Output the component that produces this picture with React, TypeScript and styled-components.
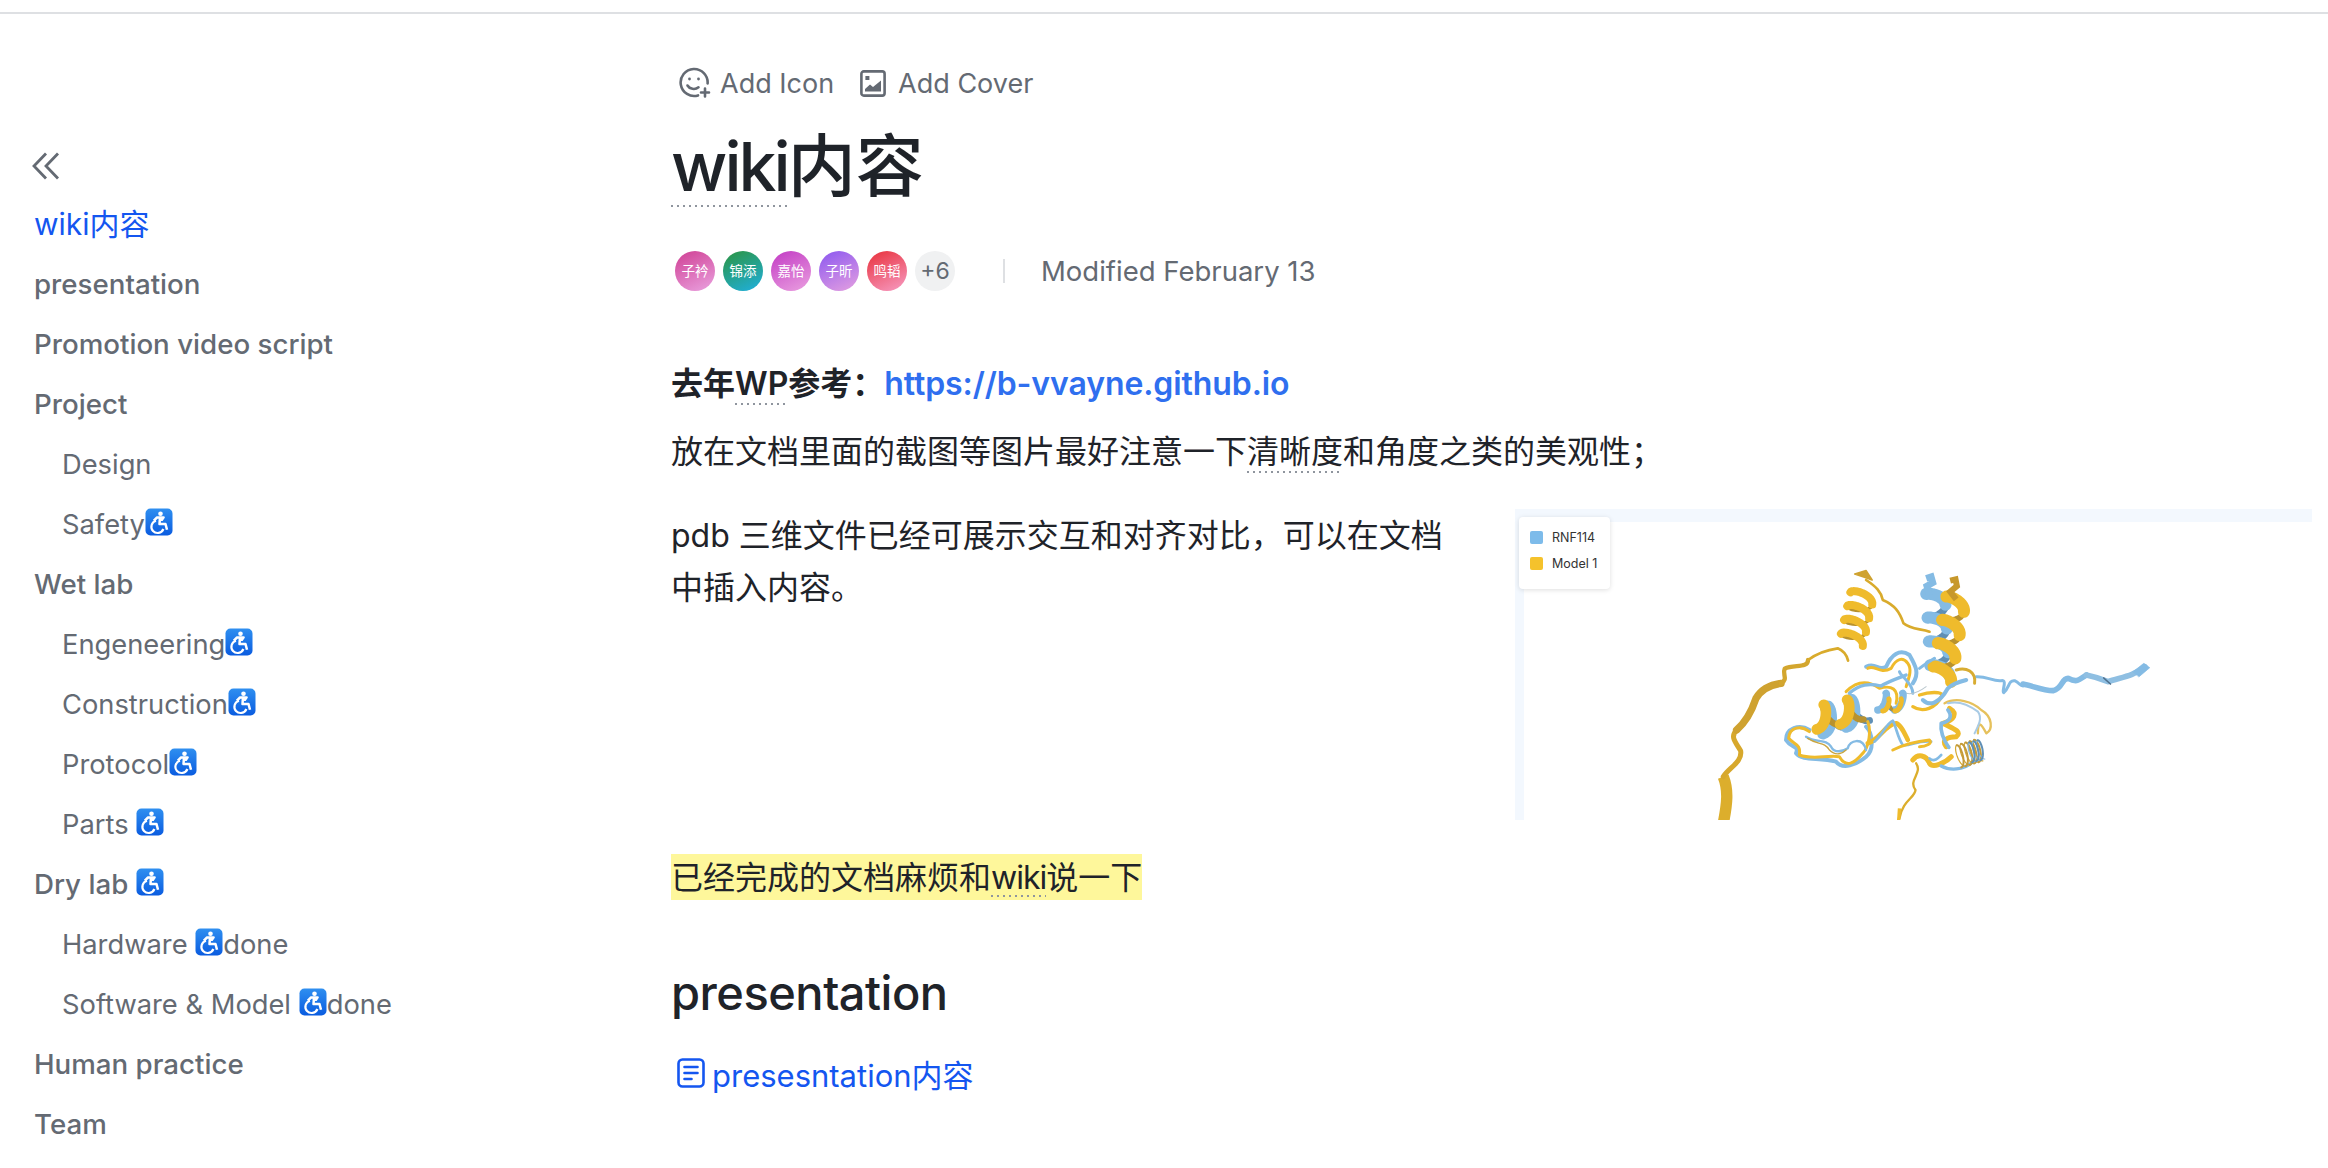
import React from "react";
import styled, {createGlobalStyle} from "styled-components";

const GlobalStyle = createGlobalStyle`
  html, body {
    margin: 0;
    height: 100%;
    background: #fff;
    overflow: hidden;
  }
  body {
    font-family: Inter, "Noto Sans CJK SC", sans-serif;
    color: #1f2329;
  }
`;

const Page = styled.div`
  width: 2328px;
  height: 1168px;
  display: flex;
  flex-direction: column;
`;

const TopBar = styled.div`
  height: 12px;
  flex: none;
  border-bottom: 2px solid #dee0e3;
`;

const Body = styled.div`
  flex: 1;
  display: flex;
  min-height: 0;
`;

const Sidebar = styled.aside`
  width: 671px;
  flex: none;
  padding: 138px 0 0 34px;
  box-sizing: border-box;
`;

const CollapseButton = styled.button`
  display: block;
  width: 30px;
  height: 28px;
  margin: 0 0 14px -3px;
  padding: 0;
  border: 0;
  background: none;
  color: #646a73;
`;

const NavList = styled.nav`
  display: flex;
  flex-direction: column;
`;

const NavItem = styled.a<{$level?: number; $active?: boolean}>`
  height: 60px;
  line-height: ${p => (p.$level ? 62 : 60)}px;
  padding-left: ${p => (p.$level ? 28 : 0)}px;
  font-size: ${p => (p.$active ? 30 : p.$level ? 27.3 : 27.7)}px;
  font-weight: ${p => (p.$level || p.$active ? 400 : 500)};
  color: ${p => (p.$active ? "#1456f0" : "#646a73")};
  white-space: pre;
`;

const Emoji = styled.svg`
  width: 28px;
  height: 28px;
  vertical-align: -2px;
`;

const Main = styled.main`
  flex: 1;
  min-width: 0;
`;

const AddRow = styled.div`
  display: flex;
  align-items: center;
  height: 40px;
  margin-top: 49px;
  padding-left: 8px;
`;

const AddButton = styled.span<{$gap: number}>`
  display: inline-flex;
  align-items: center;
  gap: ${p => p.$gap}px;
  margin-right: 26px;
  font-size: 27px;
  color: #646a73;
`;

const Title = styled.h1`
  margin: 18px 0 0;
  height: 90px;
  font-size: 68px;
  line-height: 90px;
  font-weight: 500;
`;

const Dotted = styled.span<{$pad?: number; $spacing?: number}>`
  padding-bottom: ${p => p.$pad ?? 0}px;
  letter-spacing: ${p => p.$spacing ?? 0}px;
  background: linear-gradient(to right, #8f959e 2px, transparent 2px) left bottom / 6px 2px repeat-x;
`;

const MetaRow = styled.div`
  display: flex;
  align-items: center;
  height: 40px;
  margin-top: 40px;
  padding-left: 4px;
`;

const Avatar = styled.span<{$from: string; $to: string}>`
  width: 40px;
  height: 40px;
  margin-right: 8px;
  border-radius: 50%;
  background: linear-gradient(155deg, ${p => p.$from}, ${p => p.$to});
  color: #fff;
  font-size: 13.5px;
  line-height: 40px;
  text-align: center;
  white-space: nowrap;
`;

const MoreAvatar = styled.span`
  width: 40px;
  height: 40px;
  border-radius: 50%;
  background: #f0f1f2;
  color: #646a73;
  font-size: 23px;
  line-height: 40px;
  text-align: center;
`;

const MetaDivider = styled.span`
  width: 2px;
  height: 24px;
  margin: 0 36px 0 48px;
  background: #dee0e3;
`;

const Modified = styled.span`
  font-size: 27.5px;
  color: #646a73;
`;

const Para = styled.p<{$bold?: boolean; $top: number}>`
  margin: ${p => p.$top}px 0 0;
  font-size: 32px;
  line-height: 52px;
  font-weight: ${p => (p.$bold ? 600 : 400)};
  white-space: nowrap;
`;

const SiteLink = styled.a`
  color: #2f6fef;
  letter-spacing: -0.1px;
`;

const MediaRow = styled.div`
  display: flex;
  align-items: flex-start;
  height: 311px;
  margin-top: 31px;
`;

const MediaText = styled.p`
  width: 844px;
  flex: none;
  margin: 1px 0 0;
  font-size: 32px;
  line-height: 52px;
  padding-right: 50px;
  box-sizing: border-box;
`;

const Figure = styled.figure`
  position: relative;
  width: 797px;
  height: 311px;
  margin: 0;
  flex: none;
  box-sizing: border-box;
  border-top: 13px solid #f3f8fe;
  border-left: 9px solid #f3f8fe;
`;

const Structure = styled.svg`
  display: block;
  position: absolute;
  left: -9px;
  top: -13px;
  width: 797px;
  height: 311px;
`;

const Legend = styled.div`
  position: absolute;
  left: -5px;
  top: -5px;
  width: 91px;
  height: 72px;
  box-sizing: border-box;
  padding-top: 14px;
  background: #fff;
  border-radius: 4px;
  box-shadow: 0 1px 5px rgba(0, 0, 0, 0.13);
`;

const LegendRow = styled.div`
  display: flex;
  align-items: center;
  gap: 9px;
  height: 13px;
  margin: 0 0 13px 11px;
  font-size: 12.5px;
  color: #333;
  white-space: nowrap;
`;

const Swatch = styled.i<{$color: string}>`
  width: 13px;
  height: 13px;
  border-radius: 2px;
  background: ${p => p.$color};
`;

const Highlight = styled.span`
  display: inline-block;
  height: 46px;
  line-height: 48px;
  background: #fef79b;
`;

const SectionTitle = styled.h2`
  margin: 57px 0 0;
  height: 64px;
  font-size: 47px;
  line-height: 64px;
  font-weight: 500;
  letter-spacing: -0.5px;
`;

const DocLink = styled.a`
  display: flex;
  align-items: center;
  gap: 7px;
  height: 40px;
  margin-top: 28px;
  padding-left: 6px;
  font-size: 31px;
  color: #1456f0;
`;

const SmileIcon = () => (
  <svg width="32" height="32" viewBox="0 0 32 32" fill="none" stroke="#646a73" strokeWidth="2.6" strokeLinecap="round">
    <path d="M19 28.4A13.5 13.5 0 1 1 28.6 16.5" />
    <path d="M8.5 18.5c2 3.6 7.5 4.6 11 1.8" />
    <circle cx="10.5" cy="12" r="1.4" fill="#646a73" stroke="none" />
    <circle cx="19.5" cy="12" r="1.4" fill="#646a73" stroke="none" />
    <path d="M26 21.5v8M22 25.5h8" />
  </svg>
);

const CoverIcon = () => (
  <svg width="26" height="27" viewBox="0 0 26 27" fill="none">
    <rect x="1.4" y="1.4" width="23.2" height="24.2" rx="2.4" stroke="#646a73" strokeWidth="2.6" />
    <rect x="5.4" y="6" width="4" height="4" fill="#646a73" />
    <path d="M5 21.5v-2.5l5-4.5 3 2.5 8-6.5v11z" fill="#646a73" />
  </svg>
);

const DocIcon = () => (
  <svg width="28" height="30" viewBox="0 0 28 30" fill="none" stroke="#1456f0" strokeWidth="2.6" strokeLinecap="round">
    <rect x="1.5" y="1.5" width="25" height="27" rx="4" />
    <path d="M7.5 9h13M7.5 15h13M7.5 21h7" />
  </svg>
);

const ChevronsIcon = () => (
  <svg width="30" height="28" viewBox="0 0 30 28" fill="none" stroke="#646a73" strokeWidth="2.8">
    <path d="M15 1.5 3 14l12 12.5" />
    <path d="M27 1.5 15 14l12 12.5" />
  </svg>
);

const WheelchairEmoji = () => (
  <Emoji viewBox="0 0 28 28">
    <defs>
      <linearGradient id="emojiBlue" x1="0" y1="0" x2="0" y2="1">
        <stop offset="0" stopColor="#2f8ff0" />
        <stop offset="1" stopColor="#0a5ce0" />
      </linearGradient>
    </defs>
    <rect x="0.5" y="0.5" width="27" height="27" rx="5" fill="url(#emojiBlue)" />
    <circle cx="15.5" cy="5.8" r="2.3" fill="#fff" />
    <path
      d="M15 9 14.5 16H20.5L22 21.8M8.8 12.6 12 9.5 18.6 9.4 16.6 12.4"
      fill="none"
      stroke="#fff"
      strokeWidth="2.5"
      strokeLinejoin="round"
    />
    <path d="M11 12.8a6.2 6.2 0 1 0 7.4 8.2" fill="none" stroke="#fff" strokeWidth="2.2" />
  </Emoji>
);

// front and back strands of a helix between two points, sampled along its axis
const helix = (x0: number, y0: number, x1: number, y1: number, r: number, turns: number, k: number) => {
  const dx = x1 - x0;
  const dy = y1 - y0;
  const len = Math.hypot(dx, dy);
  const nx = -dy / len;
  const ny = dx / len;
  const front: string[] = [];
  const back: string[] = [];
  const halves = Math.round(turns * 2);
  for (let turn = 0; turn < halves; turn++) {
    const pts: string[] = [];
    for (let i = 0; i <= 14; i++) {
      const t = (turn + i / 14) / halves;
      const a = t * turns * Math.PI * 2;
      const s = Math.cos(a) * r;
      const along = Math.sin(a) * r * k;
      const ax = (dx / len) * along;
      const ay = (dy / len) * along;
      pts.push(`${(x0 + dx * t + nx * s + ax).toFixed(1)} ${(y0 + dy * t + ny * s + ay).toFixed(1)}`);
    }
    (turn % 2 ? back : front).push("M" + pts.join("L"));
  }
  return {front: front.join(""), back: back.join("")};
};

const Helix: React.FC<{
  from: [number, number];
  to: [number, number];
  r: number;
  turns: number;
  color: string;
  dark: string;
  width: number;
  backWidth?: number;
  k?: number;
}> = ({from, to, r, turns, color, dark, width, backWidth, k}) => {
  const {front, back} = helix(from[0], from[1], to[0], to[1], r, turns, k ?? 0.3);
  return (
    <g fill="none" strokeLinecap="round" strokeLinejoin="round">
      <path d={back} stroke={dark} strokeWidth={backWidth ?? width * 0.6} />
      <path d={front} stroke={color} strokeWidth={width} />
    </g>
  );
};

const YELLOW = "#efbb2c";
const YELLOW_DARK = "#b8922e";
const BLUE = "#84bbe4";
const BLUE_DARK = "#5f8fb5";

const ProteinStructure = () => (
  <Structure viewBox="-552 -153 2388 933" preserveAspectRatio="none">
    <g fill="none" strokeLinecap="round" strokeLinejoin="round">
      {/* long yellow tail */}
      <path d="M72 790C84 730 88 690 72 650" stroke="#dcae2c" strokeWidth="34" strokeLinecap="butt" />
      <path d="M72 650C90 622 130 606 124 572C108 545 92 530 112 510" stroke="#d7a82c" strokeWidth="15" />
      <path d="M112 510C146 480 160 445 170 415C186 388 210 375 245 370" stroke="#cfa230" strokeWidth="22" />
      <path d="M245 370C268 358 248 342 256 326C282 312 326 326 326 300" stroke="#d3a62e" strokeWidth="13" />
      <path d="M326 300C350 282 380 270 415 265C432 272 442 285 446 302" stroke="#d9ab2c" strokeWidth="8" />
      {/* link from the tall helix to the core */}
      <path d="M500 60C530 80 545 95 550 120C585 135 600 155 612 190C635 210 665 205 690 215" stroke="#d9ab2c" strokeWidth="8" />
      <path d="M466 42 500 32 518 60 495 52Z" fill="#cfa230" stroke="#cfa230" strokeWidth="5" />
      {/* blue tail */}
      <path d="M830 350C862 348 880 365 905 362C925 358 905 395 912 398C930 385 925 360 945 362C960 368 960 378 970 378" stroke={BLUE} strokeWidth="9" />
      <path d="M970 372C1000 378 1030 392 1060 392C1090 385 1085 355 1105 355C1130 368 1135 362 1160 345" stroke={BLUE} strokeWidth="17" />
      <path d="M1160 345C1185 350 1200 355 1225 365C1260 352 1300 350 1335 320" stroke="#8fbfe2" strokeWidth="17" />
      <path d="M1300 335 1332 310 1350 323 1318 350Z" fill={BLUE} stroke={BLUE} strokeWidth="2" />
      <path d="M1212 354 1232 372" stroke="#4f6f8c" strokeWidth="5" />
    </g>

    <Helix from={[455, 250]} to={[488, 105]} r={36} turns={3.5} color={YELLOW} dark={YELLOW_DARK} width={24} backWidth={10} k={0.45} />
    <Helix from={[722, 350]} to={[708, 100]} r={28} turns={3.5} color={BLUE} dark={BLUE_DARK} width={36} k={0.45} />
    <Helix from={[725, 360]} to={[770, 115]} r={30} turns={3.5} color={YELLOW} dark={YELLOW_DARK} width={36} backWidth={18} k={0.45} />
    <path d="M680 55 695 50 700 68 682 78 690 105" fill="none" stroke={BLUE} strokeWidth="20" />
    <path d="M752 62 768 58 772 78 752 95 770 118" fill="none" stroke="#c7982b" strokeWidth="18" />

    <g fill="none" strokeLinecap="round" strokeLinejoin="round">
      {/* upper core loops */}
      <path d="M500 320C530 305 535 335 560 320C575 285 600 265 630 285C650 320 660 340 640 370" stroke={BLUE} strokeWidth="12" />
      <path d="M505 325C525 312 540 345 575 325C590 295 610 290 625 310C640 330 625 360 620 380" stroke={YELLOW} strokeWidth="9" />
      <path d="M660 325C680 310 690 305 705 295M600 335C605 350 640 370 640 400" stroke={BLUE} strokeWidth="9" />
      <path d="M440 395C470 365 505 360 540 385C575 375 600 385 590 430" stroke={YELLOW} strokeWidth="9" />
      <path d="M450 400C480 372 510 370 545 378C570 362 610 350 620 345" stroke={BLUE} strokeWidth="10" />
      <path d="M640 440C670 460 710 445 728 405C725 395 690 395 660 405" stroke={YELLOW} strokeWidth="10" />
      <path d="M670 420C690 440 720 430 745 385C760 370 780 365 800 360" stroke={BLUE} strokeWidth="12" />
      <path d="M770 330C800 320 830 335 825 370" stroke="#d8ac32" strokeWidth="9" />
      <path d="M620 400C640 405 660 395 680 380" stroke="#b9c6cc" strokeWidth="3" />
      {/* right loop */}
      <path d="M735 430C770 410 820 425 845 450C880 470 880 510 860 520C845 490 835 480 835 520" stroke="#e6c15c" strokeWidth="7" />
      <path d="M745 430C780 420 815 440 835 455C850 475 835 500 825 520" stroke="#a9cbe5" strokeWidth="6" />
      <path d="M750 445C775 460 765 480 730 490C760 505 790 515 770 530C745 530 725 540 740 560" stroke={YELLOW} strokeWidth="15" />
      <path d="M745 450C760 470 750 485 725 490C722 510 730 540 748 562" stroke={BLUE} strokeWidth="11" />
    </g>

    <Helix from={[360, 485]} to={[500, 445]} r={38} turns={2} color={BLUE} dark={BLUE_DARK} width={34} k={0.5} />
    <Helix from={[345, 475]} to={[485, 445]} r={34} turns={2} color={YELLOW} dark={YELLOW_DARK} width={32} k={0.5} />
    <Helix from={[535, 425]} to={[610, 425]} r={25} turns={1.5} color={BLUE} dark={BLUE_DARK} width={22} k={0.4} />
    <Helix from={[550, 435]} to={[605, 435]} r={18} turns={1.5} color={YELLOW} dark={YELLOW_DARK} width={15} k={0.4} />

    <g fill="none" strokeLinecap="round" strokeLinejoin="round">
      {/* lower core loops */}
      <path d="M330 510C300 490 260 505 260 540C275 565 300 555 290 580C310 605 360 590 410 605C430 630 470 615 500 590C525 570 520 520 500 500" stroke={BLUE} strokeWidth="12" />
      <path d="M330 515C305 495 270 500 268 535C285 555 305 550 300 585C340 600 380 585 420 590C440 625 465 610 490 580C510 560 515 510 505 485" stroke={YELLOW} strokeWidth="9" />
      <path d="M320 530C350 550 380 535 395 560C405 580 430 575 445 565C450 540 490 530 500 570" stroke={BLUE} strokeWidth="7" />
      <path d="M325 535C355 555 375 545 390 570C410 590 430 580 440 570" stroke="#c9a53f" strokeWidth="4" />
      <path d="M505 550C540 540 560 490 590 490C605 495 615 520 625 540" stroke={YELLOW} strokeWidth="14" />
      <path d="M525 545C550 525 560 490 580 482C590 500 595 535 610 555C630 560 655 540 695 545" stroke={BLUE} strokeWidth="8" />
      <path d="M580 570C610 555 640 545 690 540C700 550 680 560 660 560" stroke={YELLOW} strokeWidth="9" />
      <path d="M640 600C655 580 680 585 690 610C700 625 735 610 755 590" stroke={YELLOW} strokeWidth="15" />
      <path d="M690 595C705 610 720 590 725 585" stroke={BLUE} strokeWidth="8" />
      <path d="M725 618C750 632 790 632 820 605" stroke={BLUE} strokeWidth="10" />
      {/* thin tail going down */}
      <path d="M650 610C670 640 625 660 648 690C645 715 610 720 600 775" stroke="#dcae2c" strokeWidth="7" />
      <path d="M600 745 597 790" stroke={YELLOW} strokeWidth="10" strokeLinecap="butt" />
    </g>

    <Helix from={[775, 590]} to={[840, 570]} r={34} turns={5} color="#c39a3a" dark="#d4a932" width={6} k={0.35} />
    <Helix from={[810, 578]} to={[848, 568]} r={30} turns={3} color="#5f8fb5" dark="#84bbe4" width={6} k={0.35} />
  </Structure>
);

type NavEntry = {before: string; emoji?: boolean; after?: string; level?: number; active?: boolean};

const NAV: NavEntry[] = [
  {before: "wiki内容", active: true},
  {before: "presentation"},
  {before: "Promotion video script"},
  {before: "Project"},
  {before: "Design", level: 1},
  {before: "Safety", emoji: true, level: 1},
  {before: "Wet lab"},
  {before: "Engeneering", emoji: true, level: 1},
  {before: "Construction", emoji: true, level: 1},
  {before: "Protocol", emoji: true, level: 1},
  {before: "Parts ", emoji: true, level: 1},
  {before: "Dry lab ", emoji: true},
  {before: "Hardware ", emoji: true, after: "done", level: 1},
  {before: "Software & Model ", emoji: true, after: "done", level: 1},
  {before: "Human practice"},
  {before: "Team"},
];

const AVATARS = [
  {name: "子衿", from: "#cf3f93", to: "#eaa2e0"},
  {name: "锦添", from: "#2c9440", to: "#1fb0e0"},
  {name: "嘉怡", from: "#c23ac4", to: "#eaa0e0"},
  {name: "子昕", from: "#8b57f0", to: "#e5a0e0"},
  {name: "鸣韬", from: "#e8303a", to: "#f79cc4"},
];

export default function App() {
  return (
    <Page>
      <GlobalStyle />
      <TopBar />
      <Body>
        <Sidebar>
          <CollapseButton>
            <ChevronsIcon />
          </CollapseButton>
          <NavList>
            {NAV.map(item => (
              <NavItem key={item.before} $level={item.level} $active={item.active}>
                {item.before}
                {item.emoji && <WheelchairEmoji />}
                {item.after}
              </NavItem>
            ))}
          </NavList>
        </Sidebar>
        <Main>
          <AddRow>
            <AddButton $gap={9}>
              <SmileIcon />
              Add Icon
            </AddButton>
            <AddButton $gap={12}>
              <CoverIcon />
              Add Cover
            </AddButton>
          </AddRow>
          <Title>
            <Dotted $spacing={-3}>wiki</Dotted>内容
          </Title>
          <MetaRow>
            {AVATARS.map(a => (
              <Avatar key={a.name} $from={a.from} $to={a.to}>
                {a.name}
              </Avatar>
            ))}
            <MoreAvatar>+6</MoreAvatar>
            <MetaDivider />
            <Modified>Modified February 13</Modified>
          </MetaRow>
          <Para $bold $top={67}>
            去年<Dotted $pad={2}>WP</Dotted>参考：<SiteLink>https://b-vvayne.github.io</SiteLink>
          </Para>
          <Para $top={16}>
            放在文档里面的截图等图片最好注意一下<Dotted $pad={2}>清晰度</Dotted>和角度之类的美观性；
          </Para>
          <MediaRow>
            <MediaText>pdb 三维文件已经可展示交互和对齐对比，可以在文档中插入内容。</MediaText>
            <Figure>
              <ProteinStructure />
              <Legend>
                <LegendRow>
                  <Swatch $color="#7dbbea" />
                  RNF114
                </LegendRow>
                <LegendRow>
                  <Swatch $color="#f5c22c" />
                  Model 1
                </LegendRow>
              </Legend>
            </Figure>
          </MediaRow>
          <Para $top={32}>
            <Highlight>
              已经完成的文档麻烦和<Dotted $spacing={-1}>wiki</Dotted>说一下
            </Highlight>
          </Para>
          <SectionTitle>presentation</SectionTitle>
          <DocLink>
            <DocIcon />
            presesntation内容
          </DocLink>
        </Main>
      </Body>
    </Page>
  );
}
